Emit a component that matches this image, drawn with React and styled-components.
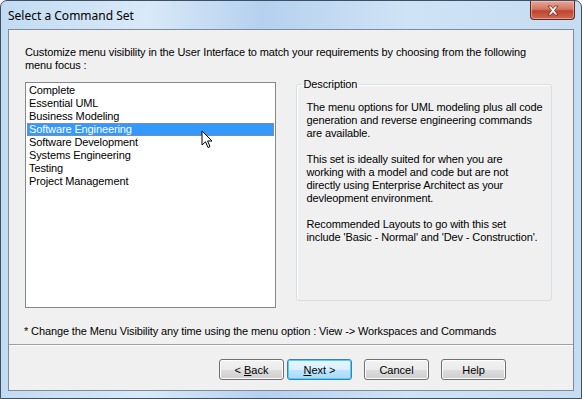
import React from "react";
import styled, { createGlobalStyle, css } from "styled-components";

const Global = createGlobalStyle`
  html, body { margin: 0; padding: 0; background: #ffffff; }
  body { font-family: "Liberation Sans", Arial, sans-serif; }
`;

const Frame = styled.div`
  width: 582px;
  height: 399px;
  box-sizing: border-box;
  border: 1px solid #3d4f63;
  border-radius: 7px 7px 0 0;
  background: linear-gradient(90deg, #c2dbf2 0%, #d9e9f8 25%, #b5d1ef 45%, #cfe3f6 70%, #c5dcf2 100%);
  display: flex;
  flex-direction: column;
  position: relative;
  overflow: hidden;
`;

const TitleBar = styled.div`
  height: 28px;
  display: flex;
  justify-content: space-between;
  align-items: flex-start;
  padding: 0 6px 0 7px;
`;

const Title = styled.div`
  font-family: "Noto Sans", "Liberation Sans", sans-serif;
  font-size: 12px;
  color: #000;
  line-height: 30px;
`;

const CloseButton = styled.div`
  width: 45px;
  height: 19px;
  box-sizing: border-box;
  border: 1px solid #5a2a22;
  border-top: none;
  border-radius: 0 0 4px 4px;
  background: linear-gradient(180deg, #e8a596 0%, #d47763 45%, #c0432b 55%, #d06a52 100%);
  display: flex;
  align-items: center;
  justify-content: center;
  box-shadow: inset 0 0 0 1px rgba(255, 210, 200, 0.5);
`;

const Client = styled.div`
  flex: 1;
  margin: 0 7px 7px 7px;
  border: 1px solid #7f8b98;
  background: #f0f0f0;
  display: flex;
  flex-direction: column;
`;

const Body = styled.div`
  padding: 16px 21px 0 16px;
  display: flex;
  flex-direction: column;
`;

const Text = styled.div`
  font-family: "Liberation Sans", Tahoma, sans-serif;
  font-size: 11px;
  line-height: 13px;
  letter-spacing: -0.12px;
  color: #000;
  white-space: nowrap;
`;

const Intro = styled(Text)`
  margin-bottom: 10px;
`;

const MainRow = styled.div`
  display: flex;
  gap: 20px;
  align-items: flex-start;
`;

const ListBox = styled.div`
  width: 251px;
  height: 226px;
  box-sizing: border-box;
  border: 1px solid #828790;
  background: #fff;
  padding: 1px;
  display: flex;
  flex-direction: column;
`;

const ListItem = styled.div`
  font-family: "Liberation Sans", Tahoma, sans-serif;
  font-size: 11px;
  line-height: 13px;
  letter-spacing: -0.12px;
  height: 13px;
  padding-left: 2px;
  color: #000;
  white-space: nowrap;
  ${(p) =>
    p.$selected &&
    css`
      background: #3399ff;
      color: #fff;
      outline: 1px dotted #c9814a;
      outline-offset: -1px;
    `}
`;

const Group = styled.fieldset`
  width: 257px;
  height: 223px;
  box-sizing: border-box;
  margin: 0;
  margin-top: -4px;
  padding: 10px 4px 0 10px;
  border: 1px solid #d5dfe5;
  border-radius: 3px;
  box-shadow: inset 1px 1px 0 #fff;
`;

const Legend = styled.legend`
  font-family: "Liberation Sans", Tahoma, sans-serif;
  font-size: 11px;
  line-height: 13px;
  letter-spacing: -0.12px;
  padding: 0 2px;
  margin-left: -5px;
  color: #000;
`;

const Para = styled(Text)`
  margin-bottom: 13px;
`;

const Footnote = styled(Text)`
  margin-top: 17px;
  margin-left: -1px;
`;

const Separator = styled.div`
  margin-top: 6px;
  border-top: 1px solid #a0a0a0;
  border-bottom: 1px solid #ffffff;
`;

const ButtonRow = styled.div`
  display: flex;
  justify-content: flex-end;
  padding: 13px 67px 0 0;
`;

const Button = styled.button`
  width: 65px;
  height: 21px;
  box-sizing: border-box;
  margin-left: ${(p) => p.$gap}px;
  border: 1px solid ${(p) => (p.$default ? "#3c7fb1" : "#707070")};
  border-radius: 3px;
  font-family: "Liberation Sans", Tahoma, sans-serif;
  font-size: 11px;
  color: #000;
  padding: 0;
  background: ${(p) =>
    p.$default
      ? "linear-gradient(180deg, #eaf6fd 0%, #d9f0fc 50%, #bee6fd 51%, #a7d9f5 100%)"
      : "linear-gradient(180deg, #f2f2f2 0%, #ebebeb 50%, #dddddd 51%, #cfcfcf 100%)"};
  box-shadow: inset 0 0 0 1px ${(p) => (p.$default ? "#48d3fb" : "#fcfcfc")};
`;

const Key = styled.span`
  text-decoration: underline;
`;

const Cursor = styled.svg`
  position: absolute;
  left: 200px;
  top: 129px;
`;

const items = [
  "Complete",
  "Essential UML",
  "Business Modeling",
  "Software Engineering",
  "Software Development",
  "Systems Engineering",
  "Testing",
  "Project Management",
];

export default function App() {
  return (
    <>
      <Global />
      <Frame>
        <TitleBar>
          <Title>Select a Command Set</Title>
          <CloseButton>
            <svg width="14" height="11" viewBox="0 0 14 11">
              <path
                d="M2 1 L5 1 L7 3.5 L9 1 L12 1 L8.5 5.5 L12 10 L9 10 L7 7.5 L5 10 L2 10 L5.5 5.5 Z"
                fill="#ffffff"
                stroke="#6b2a20"
                strokeWidth="0.8"
              />
            </svg>
          </CloseButton>
        </TitleBar>
        <Client>
          <Body>
            <Intro>
              Customize menu visibility in the User Interface to match your requirements by choosing from the following
              <br />
              menu focus :
            </Intro>
            <MainRow>
              <ListBox>
                {items.map((it) => (
                  <ListItem key={it} $selected={it === "Software Engineering"}>
                    {it}
                  </ListItem>
                ))}
              </ListBox>
              <Group>
                <Legend>Description</Legend>
                <Para>
                  The menu options for UML modeling plus all code
                  <br />
                  generation and reverse engineering commands
                  <br />
                  are available.
                </Para>
                <Para>
                  This set is ideally suited for when you are
                  <br />
                  working with a model and code but are not
                  <br />
                  directly using Enterprise Architect as your
                  <br />
                  devleopment environment.
                </Para>
                <Para>
                  Recommended Layouts to go with this set
                  <br />
                  include 'Basic - Normal' and 'Dev - Construction'.
                </Para>
              </Group>
            </MainRow>
            <Footnote>
              * Change the Menu Visibility any time using the menu option : View -&gt; Workspaces and Commands
            </Footnote>
          </Body>
          <Separator />
          <ButtonRow>
            <Button $gap={0}>
              &lt; <Key>B</Key>ack
            </Button>
            <Button $gap={3} $default>
              <Key>N</Key>ext &gt;
            </Button>
            <Button $gap={12}>Cancel</Button>
            <Button $gap={12}>Help</Button>
          </ButtonRow>
        </Client>
        <Cursor width="14" height="20" viewBox="0 0 14 20">
          <path
            d="M1 1 L1 15 L4.5 11.8 L7 17.5 L9 16.6 L6.6 11 L11 11 Z"
            fill="#ffffff"
            stroke="#000000"
            strokeWidth="1"
            strokeLinejoin="miter"
          />
        </Cursor>
      </Frame>
    </>
  );
}
